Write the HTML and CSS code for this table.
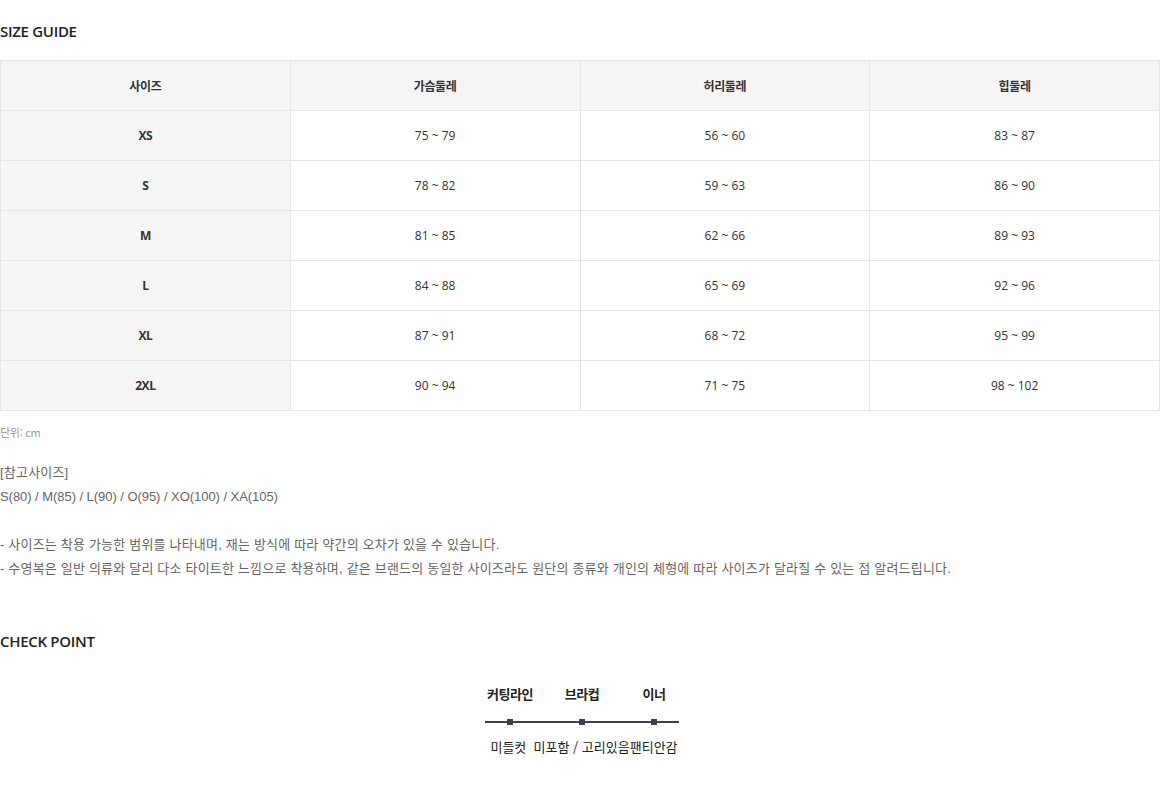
FILE: index.html
```html
<!DOCTYPE html>
<html lang="ko">
<head>
<meta charset="utf-8">
<link rel="stylesheet" href="styles.css">
</head>
<body>
<section class="guide">
  <h2 class="title">SIZE GUIDE</h2>
  <table class="size-table">
    <thead>
      <tr><th>사이즈</th><th>가슴둘레</th><th>허리둘레</th><th>힙둘레</th></tr>
    </thead>
    <tbody>
      <tr><th>XS</th><td>75 ~ 79</td><td>56 ~ 60</td><td>83 ~ 87</td></tr>
      <tr><th>S</th><td>78 ~ 82</td><td>59 ~ 63</td><td>86 ~ 90</td></tr>
      <tr><th>M</th><td>81 ~ 85</td><td>62 ~ 66</td><td>89 ~ 93</td></tr>
      <tr><th>L</th><td>84 ~ 88</td><td>65 ~ 69</td><td>92 ~ 96</td></tr>
      <tr><th>XL</th><td>87 ~ 91</td><td>68 ~ 72</td><td>95 ~ 99</td></tr>
      <tr><th>2XL</th><td>90 ~ 94</td><td>71 ~ 75</td><td>98 ~ 102</td></tr>
    </tbody>
  </table>
  <p class="unit">단위: cm</p>
  <div class="notes">
    <p>[참고사이즈]</p>
    <p class="sizes">S(80) / M(85) / L(90) / O(95) / XO(100) / XA(105)</p>
    <p class="blank">&nbsp;</p>
    <p>- 사이즈는 착용 가능한 범위를 나타내며, 재는 방식에 따라 약간의 오차가 있을 수 있습니다.</p>
    <p>- 수영복은 일반 의류와 달리 다소 타이트한 느낌으로 착용하며, 같은 브랜드의 동일한 사이즈라도 원단의 종류와 개인의 체형에 따라 사이즈가 달라질 수 있는 점 알려드립니다.</p>
  </div>
</section>
<section class="check">
  <h2 class="title">CHECK POINT</h2>
  <div class="point">
    <div class="labels">
      <span>커팅라인</span><span>브라컵</span><span>이너</span>
    </div>
    <div class="track">
      <i class="dot"></i><i class="dot"></i><i class="dot"></i>
    </div>
    <p class="values">미들컷&nbsp;&nbsp;미포함 / 고리있음팬티안감</p>
  </div>
</section>
</body>
</html>
```
FILE: styles.css
```css
html, body {
  margin: 0;
  padding: 0;
  background: #fff;
}
body {
  width: 1160px;
  font-family: "Noto Sans CJK KR", "Noto Sans", sans-serif;
  color: #222;
}
.title {
  margin: 0;
  font-family: "Open Sans", "Noto Sans CJK KR", sans-serif;
  font-size: 15px;
  font-weight: 600;
  letter-spacing: -0.3px;
  color: #222;
  line-height: 20px;
}
.guide {
  padding-top: 21px;
}
.size-table {
  margin-top: 19px;
  width: 1160px;
  border-collapse: collapse;
  table-layout: fixed;
}
.size-table th,
.size-table td {
  height: 49px;
  padding: 0;
  border: 1px solid #e6e6e6;
  text-align: center;
  font-size: 12px;
  color: #333;
}
.size-table thead th {
  background: #f5f5f5;
  font-weight: 700;
  letter-spacing: -0.3px;
}
.size-table tbody th {
  background: #f5f5f5;
  font-weight: 700;
  font-family: "Open Sans", "Noto Sans CJK KR", sans-serif;
  letter-spacing: -0.4px;
}
.size-table td {
  font-family: "Open Sans", sans-serif;
  font-weight: 400;
  color: #333;
}
.unit {
  margin: 14px 0 0;
  font-size: 11px;
  line-height: 14px;
  color: #999;
  letter-spacing: -0.3px;
}
.notes {
  margin-top: 22px;
  font-family: "Liberation Sans", "Noto Sans CJK KR", sans-serif;
  font-size: 13px;
  line-height: 24px;
  color: #666;
}
.notes p {
  margin: 0;
  letter-spacing: 0.2px;
}
.notes .sizes {
  letter-spacing: -0.05px;
}
.check {
  padding-top: 50px;
}
.point {
  width: 196px;
  margin: 34px 0 0 484px;
  display: flex;
  flex-direction: column;
  align-items: center;
}
.labels {
  display: flex;
  width: 216px;
  justify-content: space-between;
  font-size: 13px;
  font-weight: 700;
  color: #222;
  line-height: 18px;
  letter-spacing: -0.4px;
}
.labels span {
  width: 72px;
  text-align: center;
}
.track {
  margin-top: 18px;
  width: 194px;
  height: 2px;
  background: #3b4151;
  display: flex;
  justify-content: space-between;
  align-items: center;
  padding: 0 22px;
  box-sizing: border-box;
}
.dot {
  display: block;
  width: 6px;
  height: 6px;
  background: #3b4151;
}
.values {
  margin: 15px 0 0 4px;
  font-size: 13px;
  color: #222;
  line-height: 18px;
  white-space: nowrap;
  letter-spacing: 0;
}
```
